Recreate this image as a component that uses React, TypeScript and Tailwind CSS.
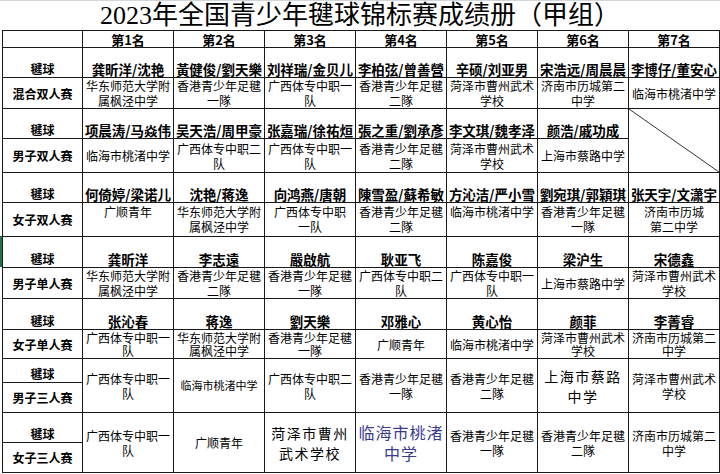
type Org = string | { lines: string[]; cls: string };

type Pair = {
  event: string;
  names: (string | null)[];
  orgs: Org[];
  top?: boolean;
  tight?: boolean;
};

const pairs: Pair[] = [
  {
    event: "混合双人赛",
    names: ["龚昕洋/沈艳", "黃健俊/劉天樂", "刘祥瑞/金贝儿", "李柏弦/曾善營", "辛硕/刘亚男", "宋浩远/周晨晨", "李博仔/董安心"],
    orgs: ["华东师范大学附属枫泾中学", "香港青少年足毽一隊", "广西体专中职一队", "香港青少年足毽二隊", "菏泽市曹州武术学校", "济南市历城第二中学", "临海市桃渚中学"],
  },
  {
    event: "男子双人赛",
    names: ["项晨涛/马焱伟", "吴天浩/周甲豪", "张嘉瑞/徐祐烜", "張之重/劉承彥", "李文琪/魏孝泽", "颜浩/戚功成", null],
    orgs: ["临海市桃渚中学", "广西体专中职二队", "广西体专中职一队", "香港青少年足毽二隊", "菏泽市曹州武术学校", "上海市蔡路中学"],
  },
  {
    event: "女子双人赛",
    top: true,
    names: ["何倚婷/梁诺儿", "沈艳/蒋逸", "向鸿燕/唐朝", "陳雪盈/蘇希敏", "方沁洁/严小雪", "劉宛琪/郭穎琪", "张天宇/文潇宇"],
    orgs: [
      "广顺青年",
      "华东师范大学附属枫泾中学",
      { lines: ["广西体专中职", "一队"], cls: "" },
      "香港青少年足毽二隊",
      "临海市桃渚中学",
      "香港青少年足毽一隊",
      { lines: ["济南市历城", "第二中学"], cls: "" },
    ],
  },
  {
    event: "男子单人赛",
    names: ["龚昕洋", "李志遠", "嚴啟航", "耿亚飞", "陈嘉俊", "梁沪生", "宋德鑫"],
    orgs: ["华东师范大学附属枫泾中学", "香港青少年足毽二隊", "香港青少年足毽一隊", "广西体专中职二队", "广西体专中职一队", "上海市蔡路中学", "菏泽市曹州武术学校"],
  },
  {
    event: "女子单人赛",
    tight: true,
    names: ["张沁春", "蒋逸", "劉天樂", "邓雅心", "黄心怡", "颜菲", "李菁睿"],
    orgs: ["广西体专中职一队", "华东师范大学附属枫泾中学", "香港青少年足毽一隊", "广顺青年", "临海市桃渚中学", "菏泽市曹州武术学校", "济南市历城第二中学"],
  },
];

const trios: { event: string; orgs: Org[] }[] = [
  {
    event: "男子三人赛",
    orgs: [
      "广西体专中职一队",
      { lines: ["临海市桃渚中学"], cls: "text-[11px]" },
      "广西体专中职二队",
      "香港青少年足毽一隊",
      "香港青少年足毽二隊",
      { lines: ["上海市蔡路", "中学"], cls: "text-[14px] leading-[20px] tracking-[1.5px]" },
      "菏泽市曹州武术学校",
    ],
  },
  {
    event: "女子三人赛",
    orgs: [
      "广西体专中职一队",
      "广顺青年",
      { lines: ["菏泽市曹州", "武术学校"], cls: "text-[14px] leading-[20px] tracking-[1.5px]" },
      { lines: ["临海市桃渚", "中学"], cls: "text-[16px] leading-[21px] tracking-[1px] text-[#3b3b8e]" },
      "香港青少年足毽一隊",
      "香港青少年足毽二隊",
      "济南市历城第二中学",
    ],
  },
];

const OrgText = ({ org }: { org: Org }) =>
  typeof org === "string" ? (
    <span>{org}</span>
  ) : (
    <span className={org.cls}>
      {org.lines.map((l) => (
        <span key={l} className="block">
          {l}
        </span>
      ))}
    </span>
  );

const Diagonal = () => (
  <div className="row-span-2 bg-white">
    <svg width="100%" height="100%" viewBox="0 0 90 63" preserveAspectRatio="none">
      <line x1="0" y1="0" x2="90" y2="63" stroke="#333" strokeWidth="1" vectorEffect="non-scaling-stroke" />
    </svg>
  </div>
);

export default function App() {
  return (
    <div className="h-[474px] w-[720px] overflow-hidden bg-white font-['Noto_Sans_CJK_SC',sans-serif] text-black">
      <div className="flex h-[30px] items-center justify-center border-t border-gray-300 font-['Liberation_Serif','Noto_Sans_CJK_SC',serif] text-[26px] leading-[30px]">
        2023年全国青少年毽球锦标赛成绩册（甲组）
      </div>
      <div className="flex">
        <div className="w-[2px]">
          <div className="mt-[206px] h-[31px] bg-[#217346]" />
        </div>
        <div className="grid grid-cols-[79px_repeat(7,90px)] grid-rows-[16px_29px_30px_29px_33px_29px_33px_30px_30px_30px_28px_23px_29px_29px_29px] gap-px bg-[#1a1a1a] p-px">
          <div className="bg-white" />
          {[1, 2, 3, 4, 5, 6, 7].map((n) => (
            <div key={n} className="flex items-center justify-center bg-white text-[13px] font-bold leading-[15px]">
              第{n}名
            </div>
          ))}

          {pairs.map((p) => (
            <>
              <div key={p.event + "k"} className="flex items-end justify-center bg-white pb-px text-[12px] font-bold leading-[15px]">
                毽球
              </div>
              {p.names.map((n, i) =>
                n === null ? (
                  <Diagonal key={p.event + i} />
                ) : (
                  <div key={p.event + i} className="flex items-end justify-center whitespace-nowrap bg-white text-[13.5px] font-bold leading-[15px]">
                    {n}
                  </div>
                )
              )}
              <div key={p.event} className="flex items-center justify-center bg-white text-[12px] font-bold leading-[15px]">
                {p.event}
              </div>
              {p.orgs.map((o, i) => (
                <div
                  key={p.event + "o" + i}
                  className={`flex justify-center bg-white text-center text-[12px] ${p.tight ? "leading-[13px]" : "leading-[15px]"} ${p.top ? "items-start pt-px" : "items-center"}`}
                >
                  <OrgText org={o} />
                </div>
              ))}
            </>
          ))}

          {trios.map((t) => (
            <>
              <div key={t.event + "k"} className="flex items-end justify-center bg-white pb-px text-[12px] font-bold leading-[15px]">
                毽球
              </div>
              {t.orgs.map((o, i) => (
                <div key={t.event + i} className="row-span-2 flex items-center justify-center bg-white text-center text-[12px] leading-[15px]">
                  <OrgText org={o} />
                </div>
              ))}
              <div key={t.event} className="flex items-center justify-center bg-white text-[12px] font-bold leading-[15px]">
                {t.event}
              </div>
            </>
          ))}
        </div>
      </div>
    </div>
  );
}
